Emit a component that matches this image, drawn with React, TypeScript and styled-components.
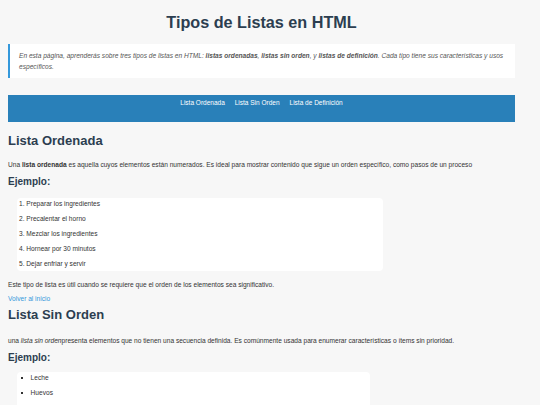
import React from "react";
import styled, { createGlobalStyle } from "styled-components";

const GlobalStyle = createGlobalStyle`
    html, body {
        margin: 0;
        padding: 0;
        background: #f7f7f7;
        font-family: "Liberation Sans", Arial, sans-serif;
        color: #333;
    }
`;

const Page = styled.div`
    padding: 0 25px 0 8px;
`;

const Title = styled.h1`
    margin: 0;
    padding: 12px 0 12px;
    text-align: center;
    font-size: 16.2px;
    line-height: 20px;
    color: #2c3e50;
`;

const Intro = styled.div`
    background: #fff;
    border-left: 2px solid #3498db;
    padding: 6px 9px;
    font-size: 6.6px;
    line-height: 11px;
    font-style: italic;
    color: #555;
`;

const Nav = styled.nav`
    margin-top: 17px;
    background: #2980b9;
    padding: 4px 0 15px;
    display: flex;
    justify-content: center;
    gap: 10px;
`;

const NavLink = styled.a`
    color: #fff;
    font-size: 6.5px;
    line-height: 8px;
    text-decoration: none;
`;

const Section = styled.section`
    display: flex;
    flex-direction: column;
`;

const Heading = styled.h2<{ $top: number }>`
    margin: ${(p) => p.$top}px 0 0;
    font-size: 13px;
    line-height: 16px;
    color: #2c3e50;
`;

const Text = styled.p<{ $top: number }>`
    margin: ${(p) => p.$top}px 0 0;
    font-size: 6.6px;
    line-height: 10px;
    color: #333;
`;

const Example = styled.h3<{ $top: number }>`
    margin: ${(p) => p.$top}px 0 0;
    font-size: 10px;
    line-height: 12px;
    color: #2c3e50;
`;

const ListBox = styled.div<{ $width: number; $top: number }>`
    margin: ${(p) => p.$top}px 0 0 9px;
    width: ${(p) => p.$width}px;
    padding: 1px 0 2px;
    background: #fff;
    border-radius: 4px;
`;

const Ordered = styled.ol`
    margin: 0;
    padding: 0 0 0 2px;
    list-style: decimal inside;
`;

const Unordered = styled.ul`
    margin: 0;
    padding: 0 0 0 4px;
    list-style: square inside;
`;

const Item = styled.li`
    font-size: 6.6px;
    line-height: 10px;
    color: #333;

    & + & {
        margin-top: 5px;
    }
`;

const Back = styled.a`
    margin-top: 4px;
    font-size: 6.6px;
    line-height: 10px;
    color: #3498db;
    text-decoration: none;
`;

const steps = [
    "Preparar los ingredientes",
    "Precalentar el horno",
    "Mezclar los ingredientes",
    "Hornear por 30 minutos",
    "Dejar enfriar y servir",
];

const shopping = ["Leche", "Huevos", "Pan", "Frutas"];

const App = () => {
    return (
        <>
            <GlobalStyle />
            <Page>
                <Title>Tipos de Listas en HTML</Title>
                <Intro>
                    En esta página, aprenderás sobre tres tipos de listas en
                    HTML: <b>listas ordenadas</b>, <b>listas sin orden</b>, y{" "}
                    <b>listas de definición</b>. Cada tipo tiene sus
                    características y usos específicos.
                </Intro>
                <Nav>
                    <NavLink href="#ordenada">Lista Ordenada</NavLink>
                    <NavLink href="#sin-orden">Lista Sin Orden</NavLink>
                    <NavLink href="#definicion">Lista de Definición</NavLink>
                </Nav>
                <Section id="ordenada">
                    <Heading $top={11}>Lista Ordenada</Heading>
                    <Text $top={11}>
                        Una <b>lista ordenada</b> es aquella cuyos elementos
                        están numerados. Es ideal para mostrar contenido que
                        sigue un orden específico, como pasos de un proceso
                    </Text>
                    <Example $top={6}>Ejemplo:</Example>
                    <ListBox $width={366} $top={10}>
                        <Ordered>
                            {steps.map((s) => (
                                <Item key={s}>{s}</Item>
                            ))}
                        </Ordered>
                    </ListBox>
                    <Text $top={9}>
                        Este tipo de lista es útil cuando se requiere que el
                        orden de los elementos sea significativo.
                    </Text>
                    <Back href="#top">Volver al inicio</Back>
                </Section>
                <Section id="sin-orden">
                    <Heading $top={3}>Lista Sin Orden</Heading>
                    <Text $top={13}>
                        una <i>lista sin orden</i>presenta elementos que no
                        tienen una secuencia definida. Es comúnmente usada para
                        enumerar características o ítems sin prioridad.
                    </Text>
                    <Example $top={6}>Ejemplo:</Example>
                    <ListBox $width={353} $top={8}>
                        <Unordered>
                            {shopping.map((s) => (
                                <Item key={s}>{s}</Item>
                            ))}
                        </Unordered>
                    </ListBox>
                </Section>
            </Page>
        </>
    );
};

export default App;
